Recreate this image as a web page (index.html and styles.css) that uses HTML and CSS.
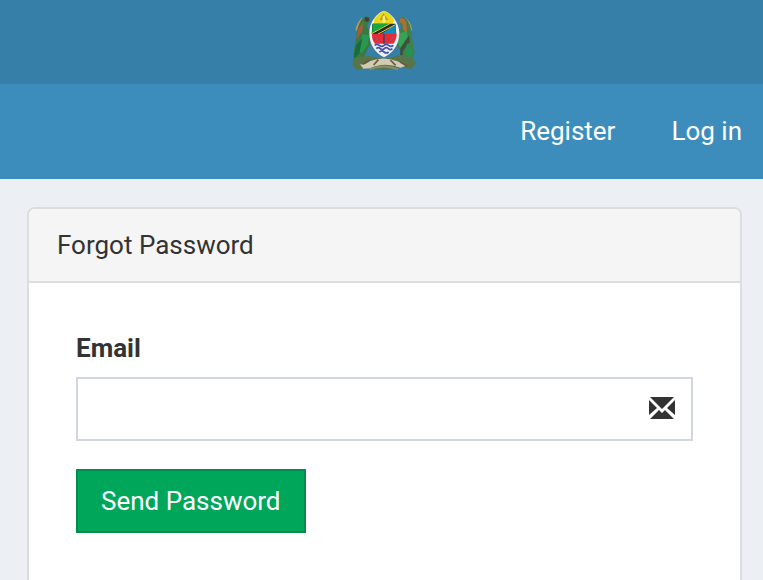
FILE: index.html
```html
<!DOCTYPE html>
<html lang="en">

<head>
    <meta charset="UTF-8">
    <meta name="viewport" content="width=device-width, initial-scale=1.0">
    <title>Forgot Password</title>
    <link rel="stylesheet" href="styles.css">
</head>

<body>
    <header>
        <a href="#" class="logo" aria-label="Home">
            <svg viewBox="21 27 207 186" aria-hidden="true">
                <!-- tusks -->
                <path d="M67 52 Q53 66 49 88" fill="none" stroke="#b99858" stroke-width="6" />
                <path d="M194 53 Q210 65 213 88" fill="none" stroke="#c99f54" stroke-width="7" />
                <!-- left supporter -->
                <path d="M65 55 Q75 42 89 49 L90 61 Q81 65 82 77 L91 92 L91 130 L77 157 L68 184 L44 180 L40 155 Q46 132 49 105 Q51 78 65 55Z" fill="#377a43" />
                <path d="M70 62 L67 91 L49 116 L53 86Z" fill="#a85a35" />
                <path d="M75 48 L88 51 L85 62 L74 61Z" fill="#493b34" />
                <path d="M67 100 L87 102 L84 128 L66 156 L54 150Z" fill="#2a9850" />
                <path d="M48 132 L67 112 L58 157 L41 173Z" fill="#176c3b" />
                <!-- right supporter -->
                <path d="M176 53 Q191 43 202 57 Q216 80 216 111 L224 155 L216 181 L190 184 L184 156 L171 134 L172 96 L184 80Z" fill="#438049" />
                <path d="M181 52 Q195 50 199 66 L201 93 L190 87 L187 67 L177 63Z" fill="#b66b37" />
                <path d="M178 98 L199 89 L207 126 L187 151 L173 125Z" fill="#37a258" />
                <path d="M207 103 L210 122 L189 151 L187 181 L180 166 L181 141Z" fill="#3d513e" />
                <path d="M201 127 L219 154 L210 175 L194 158Z" fill="#279152" />
                <!-- ground and ribbon -->
                <path d="M39 174 Q62 162 91 166 L132 174 L184 162 Q212 164 228 185 L214 205 L177 197 Q133 217 86 199 L52 207 L38 193Z" fill="#587549" />
                <path d="M60 190 Q75 193 91 180 Q131 164 172 181 L198 194 L182 200 Q131 181 90 202 L70 203Z" fill="#d3cbb1" />
                <path d="M68 190 L89 176 M101 192 L115 176 M151 177 L167 193 M181 183 L201 195" stroke="#6d5749" stroke-width="5" />
                <path d="M88 205 Q131 188 174 205" fill="none" stroke="#85906c" stroke-width="6" />
                <!-- shield -->
                <path d="M132 29 C151 34 177 61 178 94 C178 132 158 157 132 169 C106 157 87 130 88 94 C88 64 111 34 132 29Z" fill="#f1eff0" />
                <path d="M132 29 Q152 38 163 57 L158 69 L102 69 L103 53 Q117 36 132 29Z" fill="#e9d719" />
                <path d="M119 57 L130 37 L145 57Z" fill="#c29619" />
                <path d="M128 45 L134 43 L138 64 L127 66Z" fill="#f5ed75" />
                <path d="M97 68 H166 L169 100 H95Z" fill="#272e29" />
                <path d="M98 68 H145 L96 97Z" fill="#16a642" />
                <path d="M166 70 L168 99 H124Z" fill="#1688bd" />
                <path d="M95 98 L151 67 M111 101 L164 72" stroke="#e3d428" stroke-width="3" />
                <path d="M96 99 H170 Q170 116 160 128 H105 Q95 116 96 99Z" fill="#e52b35" />
                <path d="M106 107 L119 126 M159 107 L147 125" stroke="#a64e6b" stroke-width="4" />
                <path d="M104 133 q7 -6 14 0 t14 0 t14 0 t14 0 M109 143 q6 -6 12 0 t12 0 t12 0 t12 0 M118 153 q7 -6 14 0 t14 0" fill="none" stroke="#3f51ae" stroke-width="5" />
                <path d="M132 98 V128" stroke="#4c4262" stroke-width="5" />
            </svg>
        </a>
        <nav>
            <ul class="navbar">
                <li><a href="#">Register</a></li>
                <li><a href="#">Log in</a></li>
            </ul>
        </nav>
    </header>

    <main class="content">
        <div class="panel">
            <h1 class="panel-heading">Forgot Password</h1>
            <form class="panel-body">
                <label for="email">Email</label>
                <div class="input-group">
                    <input type="email" id="email" name="email">
                    <svg class="envelope" viewBox="0 0 26 22" aria-hidden="true">
                        <path d="M1 0 H25 L13 12Z M0 3 L8 11 L0 18Z M26 3 V18 L18 11Z M1 22 L10 13 L13 16 L16 13 L25 22Z" />
                    </svg>
                </div>
                <button type="submit">Send Password</button>
            </form>
        </div>
    </main>
</body>

</html>
```

FILE: styles.css
```css
* {
    box-sizing: border-box;
}

body {
    font-family: Roboto, Arial, sans-serif;
    font-size: 26px;
    line-height: 36px;
    background-color: #ecf0f5;
    color: #333;
    margin: 0;
}

.logo {
    display: flex;
    justify-content: center;
    background-color: #367fa9;
    padding: 10px 0 12px;
}

.logo svg {
    width: 69px;
    height: 62px;
}

.navbar {
    display: flex;
    justify-content: flex-end;
    gap: 56px;
    list-style: none;
    background-color: #3c8dbc;
    margin: 0;
    padding: 0 21px;
}

.navbar li a {
    display: block;
    color: white;
    padding: 29px 0 30px;
    text-decoration: none;
}

.content {
    padding: 28px 21px 0 27px;
}

.panel {
    background-color: white;
    border: 2px solid #ddd;
    border-radius: 8px;
}

.panel-heading {
    background-color: #f5f5f5;
    border-bottom: 2px solid #ddd;
    border-radius: 6px 6px 0 0;
    font-size: 26px;
    font-weight: normal;
    margin: 0;
    padding: 18px 28px;
}

.panel-body {
    padding: 47px 47px 76px;
}

label {
    display: block;
    font-weight: bold;
    margin-bottom: 11px;
}

.input-group {
    position: relative;
    margin-bottom: 28px;
}

input {
    display: block;
    width: 100%;
    height: 64px;
    border: 2px solid #d2d6de;
    border-radius: 0;
    background-color: white;
    font: inherit;
    color: #555;
    padding: 12px 64px 12px 22px;
}

.envelope {
    position: absolute;
    top: 20px;
    right: 18px;
    width: 26px;
    height: 22px;
    fill: #333;
    pointer-events: none;
}

button {
    display: block;
    background-color: #00a65a;
    color: white;
    border: 2px solid #008d4c;
    border-radius: 0;
    font: inherit;
    padding: 12px 23px;
    cursor: pointer;
}

button:hover {
    background-color: #008d4c;
}
```
